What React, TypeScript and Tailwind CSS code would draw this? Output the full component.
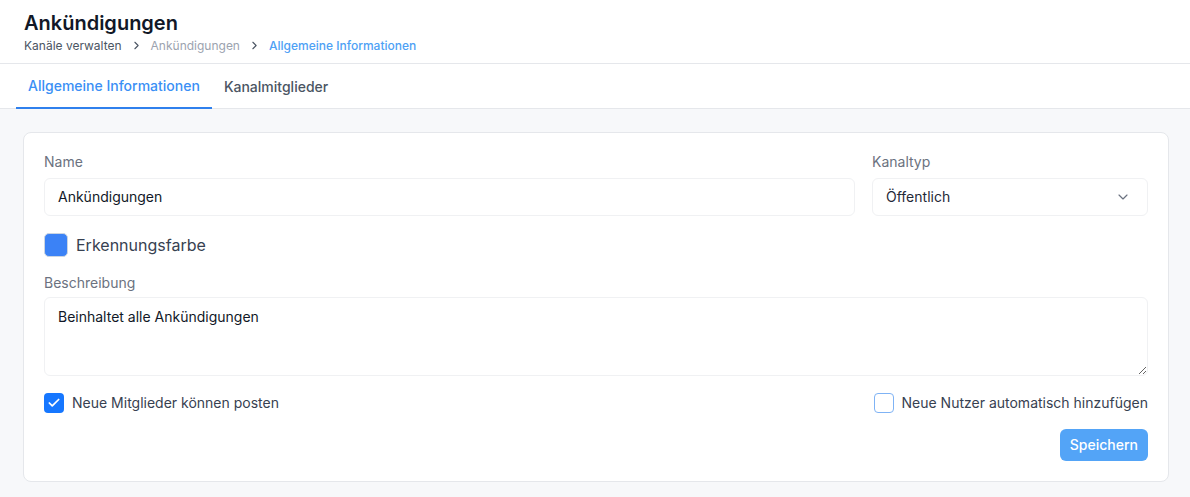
import React from "react";
import { ChevronRight, ChevronDown, Check } from "lucide-react";

export default function App() {
  return (
    <div className="min-h-[497px] bg-[#f7f8fa] font-['Inter',sans-serif] text-[#1f2937]">
      <div className="bg-white border-b border-[#e5e7eb] px-6 pt-[9px] pb-[9px]">
        <h1 className="text-[20px] leading-[28px] font-semibold text-[#111827]">Ankündigungen</h1>
        <nav className="flex items-center text-[12px] leading-[17px]">
          <span className="text-[#4b5563]">Kanäle verwalten</span>
          <ChevronRight className="mx-[8px] w-[13px] h-[13px] text-[#4b5563]" strokeWidth={2} />
          <span className="text-[#9ca3af]">Ankündigungen</span>
          <ChevronRight className="mx-[8px] w-[13px] h-[13px] text-[#4b5563]" strokeWidth={2} />
          <span className="text-[#4ea1f5] font-medium">Allgemeine Informationen</span>
        </nav>
      </div>
      <div className="bg-white border-b border-[#e5e7eb] px-4 flex h-[45px]">
        <div className="px-3 flex items-center text-sm font-medium text-[#3a8ff5] border-b-2 border-[#2f80ed] -mb-px pt-[1px]">
          Allgemeine Informationen
        </div>
        <div className="px-3 flex items-center text-sm font-medium text-[#4b5563] pt-[1px]">
          Kanalmitglieder
        </div>
      </div>
      <div className="pl-[23px] pr-[21px] pt-[23px] pb-4">
        <div className="bg-white border border-[#e5e7eb] rounded-lg px-5 pt-[19px] pb-5">
          <div className="flex gap-[17px]">
            <div className="flex-1">
              <label className="block text-sm leading-5 text-[#6b7280] mb-1.5">Name</label>
              <div className="h-[38px] border border-[#f0f1f3] rounded-md px-[13px] flex items-center text-sm text-[#111827]">
                Ankündigungen
              </div>
            </div>
            <div className="w-[276px]">
              <label className="block text-sm leading-5 text-[#6b7280] mb-1.5">Kanaltyp</label>
              <div className="h-[38px] border border-[#f0f1f3] rounded-md pl-[13px] pr-4 flex items-center justify-between text-sm text-[#1f2937]">
                <span>Öffentlich</span>
                <ChevronDown className="w-4 h-4 text-[#6b7280]" strokeWidth={1.75} />
              </div>
            </div>
          </div>
          <div className="flex items-center gap-2 mt-[17px]">
            <div className="w-6 h-6 rounded-[5px] bg-[#3b82f6] border border-[#cbd5e1]"></div>
            <span className="text-base text-[#374151]">Erkennungsfarbe</span>
          </div>
          <label className="block text-sm leading-5 text-[#6b7280] mt-4 mb-1">Beschreibung</label>
          <textarea
            className="block w-full h-[79px] border border-[#f0f1f3] rounded-md px-[13px] py-[9px] text-sm text-[#111827] resize-y outline-none"
            defaultValue="Beinhaltet alle Ankündigungen"
          />
          <div className="flex items-center justify-between mt-[17px]">
            <div className="flex items-center gap-2">
              <div className="w-5 h-5 rounded-[4px] bg-[#1677ff] flex items-center justify-center">
                <Check className="w-[14px] h-[14px] text-white" strokeWidth={3} />
              </div>
              <span className="text-sm text-[#374151]">Neue Mitglieder können posten</span>
            </div>
            <div className="flex items-center gap-2">
              <div className="w-5 h-5 rounded-[4px] border border-[#7fb3f5] bg-white"></div>
              <span className="text-sm text-[#374151]">Neue Nutzer automatisch hinzufügen</span>
            </div>
          </div>
          <div className="flex justify-end mt-4">
            <button className="h-8 px-[10px] rounded-md bg-[#53a4f7] text-white text-sm font-medium">
              Speichern
            </button>
          </div>
        </div>
      </div>
    </div>
  );
}
